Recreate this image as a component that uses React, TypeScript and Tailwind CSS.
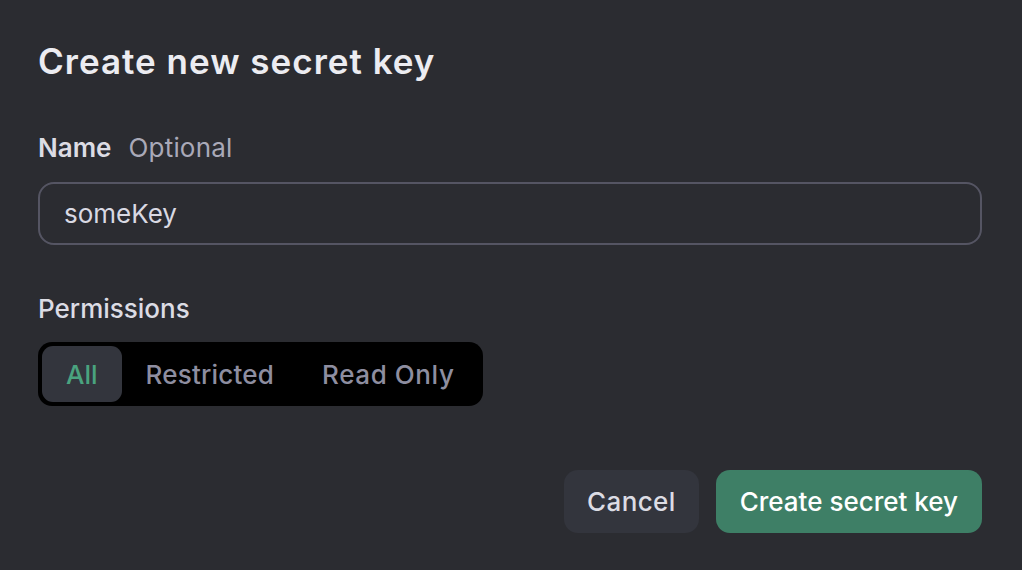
export default function App() {
  return (
    <div
      className="w-[1022px] h-[570px] bg-[#2b2c31] pl-[38px] pr-[40px] pt-[37px] text-[#ececf1]"
      style={{ fontFamily: "Inter, 'Noto Sans', sans-serif" }}
    >
      <h1 className="text-[35px] font-semibold leading-[48px] tracking-[1px]">Create new secret key</h1>

      <div className="mt-[45px] flex items-baseline gap-[17px] text-[26px] leading-[36px]">
        <span className="font-semibold text-[#dcdce4]">Name</span>
        <span className="text-[#a9a9b8] tracking-[0.2px]">Optional</span>
      </div>

      <input
        className="mt-[16px] block h-[63px] w-[944px] rounded-[16px] border-2 border-[#555563] bg-transparent px-[24px] text-[26px] text-[#d9d9e3] outline-none"
        defaultValue="someKey"
      />

      <div className="mt-[46px] text-[26px] font-medium leading-[36px] text-[#dcdce4]">Permissions</div>

      <div className="mt-[15px] inline-flex h-[64px] items-center rounded-[14px] bg-black p-[4px] text-[26px] font-medium">
        <button className="h-[56px] rounded-[11px] bg-[#33353d] px-[24px] text-[#4aa37f]">All</button>
        <button className="h-[56px] px-[24px] text-[#8e8ea0] tracking-[0.2px]">Restricted</button>
        <button className="h-[56px] px-[24px] text-[#8e8ea0] tracking-[0.6px]">Read Only</button>
      </div>

      <div className="mt-[64px] flex justify-end gap-[17px] text-[26px] font-medium">
        <button className="h-[63px] rounded-[14px] bg-[#33353d] px-[23px] text-[#dcdce4] tracking-[0.4px]">Cancel</button>
        <button className="h-[63px] rounded-[14px] bg-[#3e7f66] px-[24px] text-white">Create secret key</button>
      </div>
    </div>
  );
}
